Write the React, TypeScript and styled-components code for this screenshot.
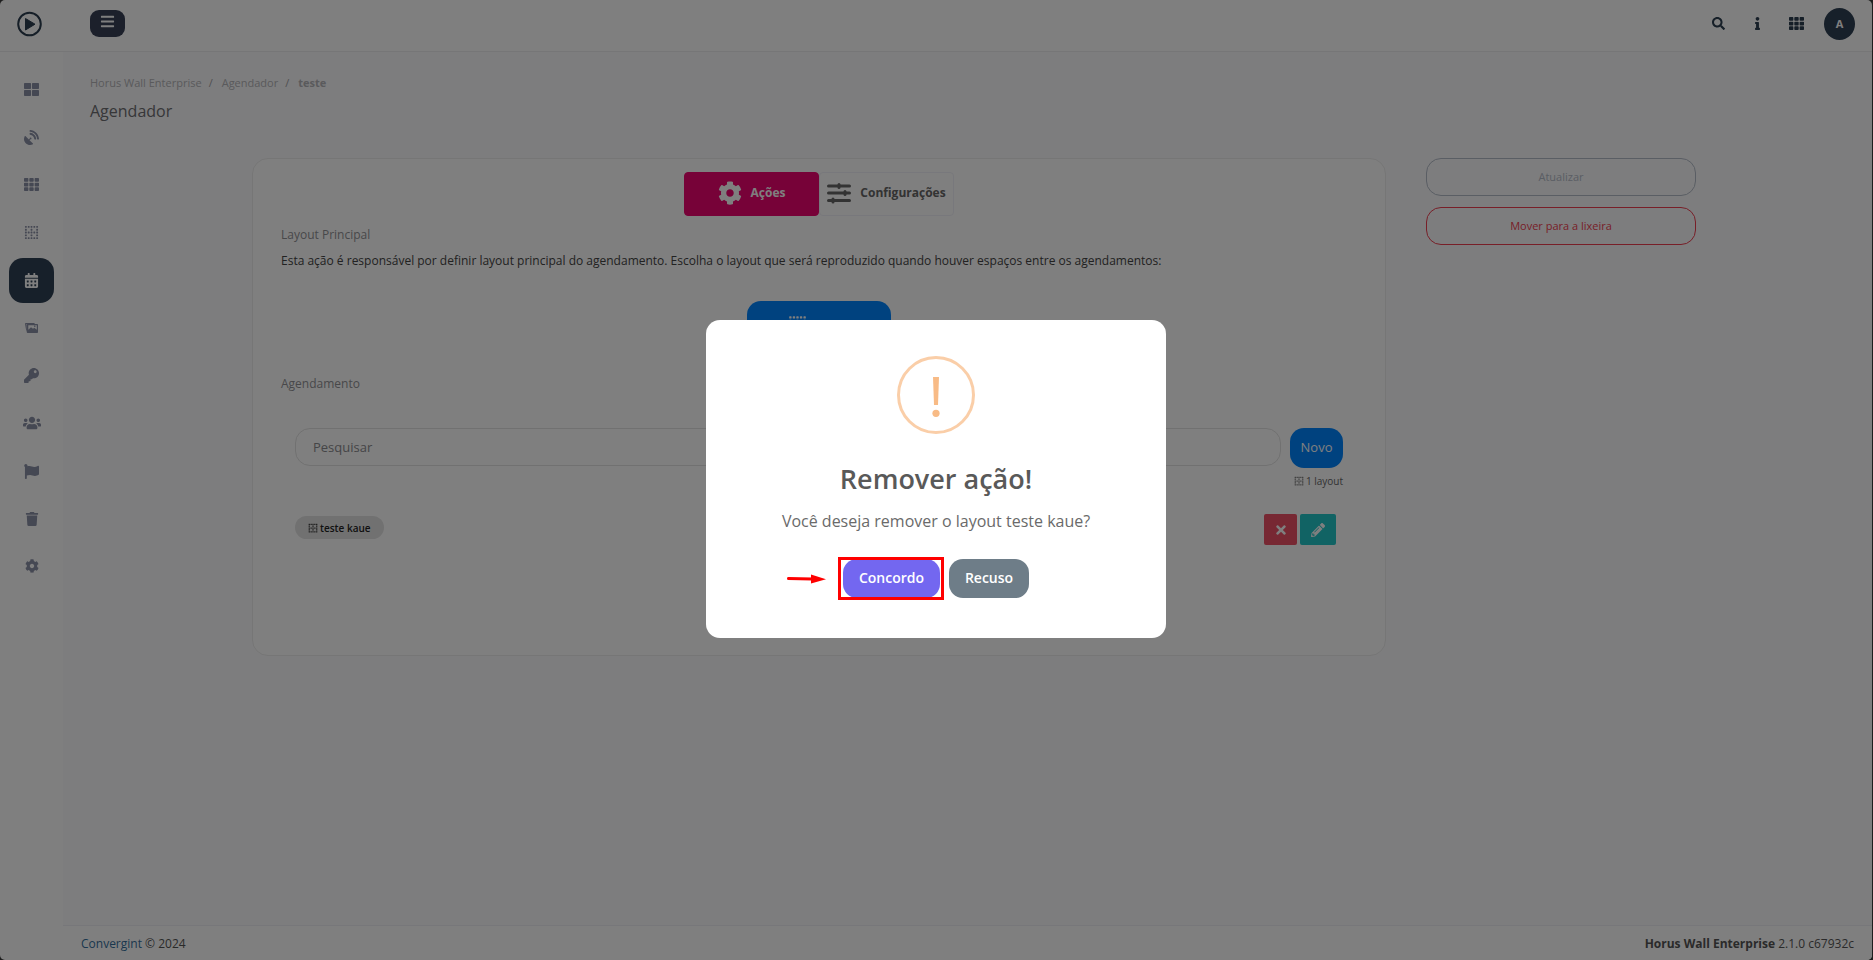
import React from 'react';
import styled, { createGlobalStyle, css } from 'styled-components';
import {
  FaThLarge, FaSatelliteDish, FaTh, FaBorderNone, FaCalendarAlt, FaKey, FaUsers,
  FaFlag, FaTrash, FaCog, FaSearch, FaInfo, FaBars, FaTimes, FaPencilAlt,
} from 'react-icons/fa';

const GlobalStyle = createGlobalStyle`
  *, *::before, *::after { box-sizing: border-box; }
  body {
    margin: 0;
    background: #3c3c3c;
    color: #444;
    font: 12px/20px "Open Sans", "Noto Sans", sans-serif;
  }
  button, input { font: inherit; }
  button { cursor: pointer; }
  h1, h2, p, ul, ol { margin: 0; padding: 0; }
  ul, ol { list-style: none; }
  a { color: inherit; text-decoration: none; }
  svg { display: block; flex: none; }
`;

const Shell = styled.div`
  display: flex;
  flex-direction: column;
  min-height: 100vh;
  margin-right: 1px;
  border-radius: 5px;
  overflow: hidden;
  background: #fff;
`;

const TopBar = styled.header`
  display: flex;
  align-items: center;
  height: 52px;
  padding: 0 17px 4px 17px;
  border-bottom: 1px solid #ececee;
`;

const Logo = styled.a`
  display: flex;
  width: 73px;
`;

const MenuButton = styled.button`
  display: flex;
  justify-content: center;
  width: 35px;
  height: 27px;
  padding: 4px 0 0;
  border: 0;
  border-radius: 9px;
  background: #384057;
  color: #fff;
`;

const Tools = styled.div`
  display: flex;
  align-items: center;
  margin-left: auto;
  color: #2c3e50;
`;

const ToolButton = styled.button`
  display: flex;
  justify-content: center;
  width: 39px;
  padding: 0;
  border: 0;
  background: none;
  color: inherit;
`;

const Avatar = styled.button`
  width: 31px;
  height: 32px;
  margin-left: 8px;
  padding: 0;
  border: 0;
  border-radius: 50%;
  background: #2f4054;
  color: #fff;
  font-size: 11px;
  font-weight: 700;
`;

const Body = styled.div`
  display: flex;
  flex: 1;
`;

const SideBar = styled.nav`
  width: 63px;
  padding: 15px 9px;
`;

const SideList = styled.ul`
  display: flex;
  flex-direction: column;
  justify-content: space-between;
  height: 522px;
`;

const SideLink = styled.a<{ $active?: boolean }>`
  display: flex;
  align-items: center;
  justify-content: center;
  height: 45px;
  border-radius: 14px;
  color: ${p => (p.$active ? '#fff' : '#8b90a6')};
  background: ${p => (p.$active ? '#2f4054' : 'transparent')};
`;

const Main = styled.div`
  display: flex;
  flex: 1;
  flex-direction: column;
  background: #fbfbfd;
`;

const Content = styled.main`
  flex: 1;
  padding: 21px 27px;
`;

const Breadcrumb = styled.ol`
  display: flex;
  font-size: 11px;
  color: #b4b4b8;

  li + li::before {
    content: "/";
    padding: 0 9px 0 7px;
    color: #a0a0a4;
    font-weight: 400;
  }
`;

const Current = styled.li`
  font-weight: 700;
`;

const PageTitle = styled.h1`
  margin-top: 6px;
  font-size: 16px;
  line-height: 24px;
  font-weight: 400;
  color: #6e6e72;
`;

const Columns = styled.div`
  display: flex;
  align-items: flex-start;
  gap: 40px;
  padding: 35px 149px 0 162px;
`;

const Card = styled.section`
  flex: 1;
  min-height: 498px;
  padding: 13px 28px;
  border: 1px solid #ececec;
  border-radius: 16px;
  background: #fff;
`;

const Tabs = styled.div`
  display: flex;
  justify-content: center;
`;

const Tab = styled.button<{ $active?: boolean }>`
  display: flex;
  align-items: center;
  justify-content: center;
  gap: 9px;
  width: 135px;
  height: 44px;
  padding: 0 0 2px;
  border: 1px solid #f1f1f8;
  border-radius: 4px;
  background: #fff;
  color: #666;
  font-weight: 700;
  ${p => p.$active && css`
    border-color: #ee0470;
    background: #ee0470;
    color: #fff;
  `}
`;

const SectionTitle = styled.h2`
  margin-top: 9px;
  font-size: 12px;
  font-weight: 400;
  color: #919195;
`;

const Lead = styled.p`
  margin-top: 6px;
  color: #444;
`;

const LayoutButton = styled.button`
  display: flex;
  align-items: center;
  width: 144px;
  height: 44px;
  margin: 30px auto 29px;
  padding: 2px 41px 0;
  border: 0;
  border-radius: 14px;
  background: #0084fe;
  color: #fff;
`;

const Schedule = styled.div`
  padding: 34px 14px 0;
`;

const SearchRow = styled.form`
  display: flex;
  align-items: flex-start;
  gap: 9px;
`;

const SearchInput = styled.input`
  flex: 1;
  height: 38px;
  padding: 0 17px;
  border: 1px solid #e2e2e2;
  border-radius: 15px;
  background: #fff;
  font-size: 13px;
  &::placeholder { color: #8a8a8e; opacity: 1; }
`;

const NewButton = styled.button`
  width: 53px;
  height: 40px;
  padding: 0 0 2px;
  border: 0;
  border-radius: 14px;
  background: #0084fe;
  color: #fff;
  font-size: 13px;
`;

const Count = styled.p`
  display: flex;
  align-items: center;
  justify-content: flex-end;
  gap: 2px;
  margin-top: 3px;
  font-size: 10px;
  color: #666;
`;

const Item = styled.div`
  display: flex;
  align-items: flex-start;
  justify-content: space-between;
  margin-top: 23px;
  padding-right: 7px;
`;

const Badge = styled.span`
  display: flex;
  align-items: center;
  gap: 2px;
  height: 23px;
  margin-top: 2px;
  padding: 0 13px;
  border-radius: 12px;
  background: #e2e2e2;
  color: #222;
  font-size: 10px;
  font-weight: 600;
`;

const Actions = styled.div`
  display: flex;
  gap: 3px;
`;

const ActionButton = styled.button<{ $tone: 'danger' | 'info' }>`
  display: flex;
  align-items: center;
  justify-content: center;
  width: ${p => (p.$tone === 'danger' ? 33 : 36)}px;
  height: 31px;
  padding: 0;
  border: 0;
  border-radius: 2px;
  background: ${p => (p.$tone === 'danger' ? '#ee5066' : '#22c6c8')};
  color: #fff;
`;

const Aside = styled.aside`
  display: flex;
  flex-direction: column;
  gap: 11px;
  width: 270px;
`;

const OutlineButton = styled.button<{ $tone: 'muted' | 'danger' }>`
  height: 38px;
  border: 1px solid ${p => (p.$tone === 'danger' ? '#f03e50' : '#b4bcc8')};
  border-radius: 15px;
  background: transparent;
  color: ${p => (p.$tone === 'danger' ? '#f03e50' : '#b4bcc8')};
  font-size: 11px;
`;

const Footer = styled.footer`
  display: flex;
  justify-content: space-between;
  height: 35px;
  padding: 8px 18px;
  border-top: 1px solid #eeeef4;
  background: #fff;
  color: #555;
`;

const FooterLink = styled.a`
  color: #356f9c;
`;

const Backdrop = styled.div`
  position: fixed;
  inset: 0;
  display: flex;
  align-items: center;
  justify-content: center;
  padding: 0 1px 2px 0;
  background: rgba(0, 0, 0, 0.5);
`;

const Dialog = styled.div`
  display: flex;
  flex-direction: column;
  align-items: center;
  width: 460px;
  height: 318px;
  padding-top: 36px;
  border-radius: 14px;
  background: #fff;
  color: #595959;
`;

const DialogTitle = styled.h2`
  margin-top: 25px;
  font-size: 27px;
  line-height: 40px;
  font-weight: 600;
`;

const DialogText = styled.p`
  margin-top: 10px;
  font-size: 16px;
  line-height: 24px;
  color: #6a6a6a;
`;

const DialogActions = styled.div`
  position: relative;
  display: flex;
  gap: 9px;
  margin-top: 26px;
`;

const DialogButton = styled.button<{ $primary?: boolean }>`
  width: ${p => (p.$primary ? 97 : 80)}px;
  height: 39px;
  padding: 0 0 2px;
  border: 0;
  border-radius: 14px;
  background: ${p => (p.$primary ? '#7367f0' : '#6e7d88')};
  color: #fff;
  font-size: 14px;
  font-weight: 600;
`;

const Highlight = styled.span`
  position: absolute;
  top: -2px;
  left: -5px;
  width: 106px;
  height: 43px;
  border: 3px solid #f00;
  pointer-events: none;
`;

const Arrow = styled.svg`
  position: absolute;
  top: 14px;
  left: -57px;
`;

const PlayLogo = () => (
  <svg width="25" height="26" viewBox="0 0 25 26" fill="none">
    <circle cx="12.5" cy="13" r="11.3" stroke="#2c3e50" strokeWidth="2" />
    <path d="M8.5 7.5 18 13.2 8.5 19Z" fill="#2c3e50" stroke="#2c3e50" strokeLinejoin="round" />
  </svg>
);

const PhotosIcon = () => (
  <svg width="13" height="10" viewBox="0 0 13 10" fill="currentColor">
    <path d="M.8 0h8.8v1H1.3l.6 6.5H1.2L0 .8C0 .3.3 0 .8 0Z" />
    <path fillRule="evenodd" d="M3 1h9c.6 0 1 .4 1 1v7c0 .6-.4 1-1 1H3c-.8 0-1.3-.6-1.3-1.300L1.500 2c0-.6.700-1 1.500-1Zm.3 1.200V6.800L6 4.300l2 1.500 1.300-1 2.500 2V2.200ZM9.800 2.500a.8.8 0 1 1 0 1.600.8.8 0 0 1 0-1.600Z" />
  </svg>
);

const SlidersIcon = () => (
  <svg width="24" height="22" viewBox="0 0 24 22" fill="none" stroke="currentColor" strokeLinecap="round">
    <path d="M1.5 4h21M1.5 11h21M1.5 18.5h21" strokeWidth="3" />
    <path d="M12 2.5v3M18 9.5v3M6 17v3" strokeWidth="3" />
  </svg>
);

const WarningIcon = () => (
  <svg width="78" height="78" viewBox="0 0 78 78">
    <circle cx="39" cy="39" r="37.5" fill="none" stroke="#facea8" strokeWidth="3" />
    <path d="M36 21h6l-1 28h-4Z" fill="#f8bb86" />
    <circle cx="39" cy="57.3" r="3.6" fill="#f8bb86" />
  </svg>
);

const sideItems = [
  { label: 'Painel', icon: <FaThLarge size={15} /> },
  { label: 'Fontes', icon: <FaSatelliteDish size={15} /> },
  { label: 'Grade', icon: <FaTh size={15} /> },
  { label: 'Layouts', icon: <FaBorderNone size={15} /> },
  { label: 'Agendador', icon: <FaCalendarAlt size={15} />, active: true },
  { label: 'Imagens', icon: <PhotosIcon /> },
  { label: 'Chaves', icon: <FaKey size={15} /> },
  { label: 'Grupos', icon: <FaUsers size={18} /> },
  { label: 'Marcadores', icon: <FaFlag size={15} /> },
  { label: 'Lixeira', icon: <FaTrash size={14} /> },
  { label: 'Ajustes', icon: <FaCog size={14} /> },
];

export default function App() {
  return (
    <>
      <GlobalStyle />
      <Shell>
        <TopBar>
          <Logo href="#" aria-label="Início"><PlayLogo /></Logo>
          <MenuButton aria-label="Menu"><FaBars size={15} /></MenuButton>
          <Tools>
            <ToolButton aria-label="Buscar"><FaSearch size={13} /></ToolButton>
            <ToolButton aria-label="Informações"><FaInfo size={13} /></ToolButton>
            <ToolButton aria-label="Aplicativos"><FaTh size={15} /></ToolButton>
            <Avatar>A</Avatar>
          </Tools>
        </TopBar>
        <Body>
          <SideBar>
            <SideList>
              {sideItems.map(item => (
                <li key={item.label}>
                  <SideLink href="#" aria-label={item.label} $active={item.active}>{item.icon}</SideLink>
                </li>
              ))}
            </SideList>
          </SideBar>
          <Main>
            <Content>
              <Breadcrumb>
                <li><a href="#">Horus Wall Enterprise</a></li>
                <li><a href="#">Agendador</a></li>
                <Current>teste</Current>
              </Breadcrumb>
              <PageTitle>Agendador</PageTitle>
              <Columns>
                <Card>
                  <Tabs>
                    <Tab $active><FaCog size={24} />Ações</Tab>
                    <Tab><SlidersIcon />Configurações</Tab>
                  </Tabs>
                  <SectionTitle>Layout Principal</SectionTitle>
                  <Lead>
                    Esta ação é responsável por definir layout principal do agendamento. Escolha o layout que
                    será reproduzido quando houver espaços entre os agendamentos:
                  </Lead>
                  <LayoutButton aria-label="Layout"><FaBorderNone size={19} /></LayoutButton>
                  <SectionTitle>Agendamento</SectionTitle>
                  <Schedule>
                    <SearchRow>
                      <SearchInput type="text" aria-label="Pesquisar" placeholder="Pesquisar" />
                      <NewButton type="button">Novo</NewButton>
                    </SearchRow>
                    <Count><FaBorderNone size={10} />1 layout</Count>
                    <Item>
                      <Badge><FaBorderNone size={10} />teste kaue</Badge>
                      <Actions>
                        <ActionButton $tone="danger" aria-label="Remover"><FaTimes size={14} /></ActionButton>
                        <ActionButton $tone="info" aria-label="Editar"><FaPencilAlt size={14} /></ActionButton>
                      </Actions>
                    </Item>
                  </Schedule>
                </Card>
                <Aside>
                  <OutlineButton $tone="muted">Atualizar</OutlineButton>
                  <OutlineButton $tone="danger">Mover para a lixeira</OutlineButton>
                </Aside>
              </Columns>
            </Content>
            <Footer>
              <span><FooterLink href="#">Convergint</FooterLink> © 2024</span>
              <span><b>Horus Wall Enterprise</b> 2.1.0 c67932c</span>
            </Footer>
          </Main>
        </Body>
      </Shell>
      <Backdrop>
        <Dialog role="dialog" aria-modal="true" aria-labelledby="dialog-title">
          <WarningIcon />
          <DialogTitle id="dialog-title">Remover ação!</DialogTitle>
          <DialogText>Você deseja remover o layout teste kaue?</DialogText>
          <DialogActions>
            <Arrow width="40" height="12" viewBox="0 0 40 12">
              <path d="M2.5 5.5 26 6" stroke="#f00" strokeWidth="3" strokeLinecap="round" />
              <path d="M25 1.5 40 6.2 25 10.5Z" fill="#f00" />
            </Arrow>
            <DialogButton $primary>Concordo</DialogButton>
            <DialogButton>Recuso</DialogButton>
            <Highlight />
          </DialogActions>
        </Dialog>
      </Backdrop>
    </>
  );
}
